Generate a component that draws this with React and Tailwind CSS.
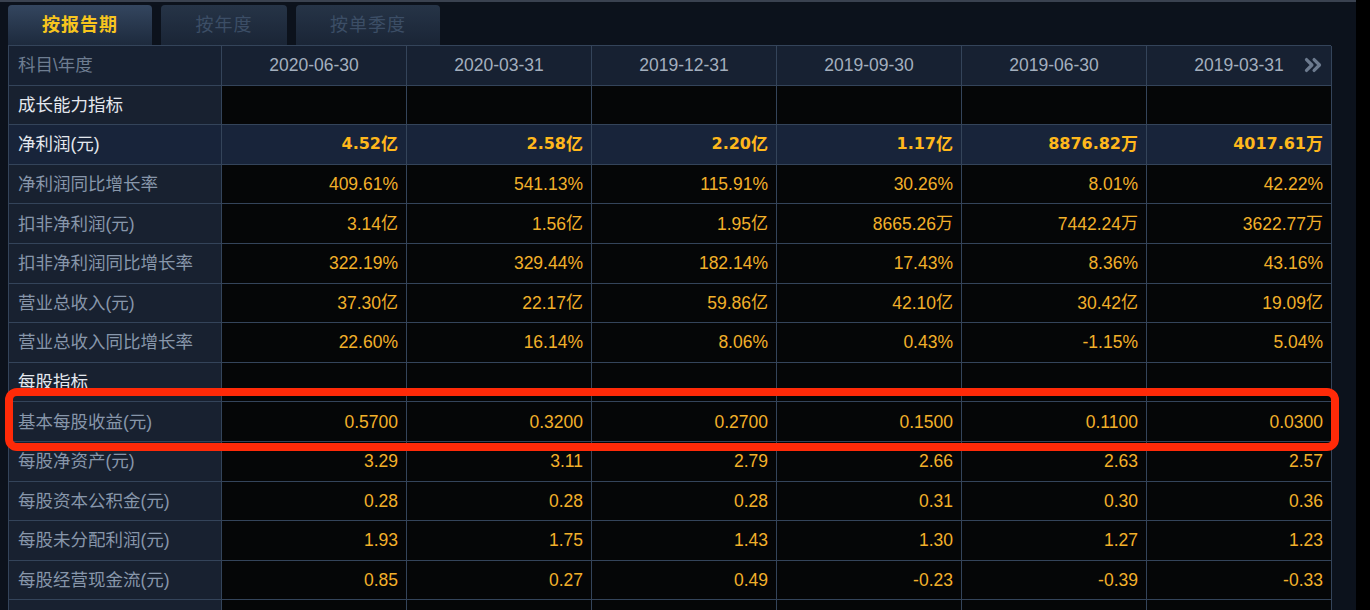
import { ChevronsRight } from "lucide-react";
import { clsx } from "clsx";

const dates = ["2020-06-30", "2020-03-31", "2019-12-31", "2019-09-30", "2019-06-30", "2019-03-31"];

const rows = [
  { label: "成长能力指标", type: "section" },
  { label: "净利润(元)", type: "bold", values: ["4.52亿", "2.58亿", "2.20亿", "1.17亿", "8876.82万", "4017.61万"] },
  { label: "净利润同比增长率", values: ["409.61%", "541.13%", "115.91%", "30.26%", "8.01%", "42.22%"] },
  { label: "扣非净利润(元)", values: ["3.14亿", "1.56亿", "1.95亿", "8665.26万", "7442.24万", "3622.77万"] },
  { label: "扣非净利润同比增长率", values: ["322.19%", "329.44%", "182.14%", "17.43%", "8.36%", "43.16%"] },
  { label: "营业总收入(元)", values: ["37.30亿", "22.17亿", "59.86亿", "42.10亿", "30.42亿", "19.09亿"] },
  { label: "营业总收入同比增长率", values: ["22.60%", "16.14%", "8.06%", "0.43%", "-1.15%", "5.04%"] },
  { label: "每股指标", type: "section" },
  { label: "基本每股收益(元)", values: ["0.5700", "0.3200", "0.2700", "0.1500", "0.1100", "0.0300"] },
  { label: "每股净资产(元)", values: ["3.29", "3.11", "2.79", "2.66", "2.63", "2.57"] },
  { label: "每股资本公积金(元)", values: ["0.28", "0.28", "0.28", "0.31", "0.30", "0.36"] },
  { label: "每股未分配利润(元)", values: ["1.93", "1.75", "1.43", "1.30", "1.27", "1.23"] },
  { label: "每股经营现金流(元)", values: ["0.85", "0.27", "0.49", "-0.23", "-0.39", "-0.33"] },
  { label: "", type: "section" },
];

const font = { fontFamily: '"Liberation Sans", "Noto Sans CJK SC", sans-serif' };

const splitValue = (v) => {
  const m = v.match(/^(.*?)(亿|万)$/);
  return m ? [m[1], m[2]] : [v, ""];
};

const Tab = ({ label, active, width }) => (
  <div
    className={clsx(
      "h-[40px] flex items-center justify-center rounded-t-[4px] text-[18px] tracking-[1px]",
      width,
      active
        ? "bg-gradient-to-b from-[#34465f] to-[#1d2a3d] text-[#f7c51e] font-bold"
        : "bg-gradient-to-b from-[#263447] to-[#1a2536] text-[#3c4e66]"
    )}
  >
    {label}
  </div>
);

export default function App() {
  return (
    <div className="w-[1370px] h-[610px] bg-black overflow-hidden flex" style={font}>
      <div className="relative w-[1356px] h-full bg-[#0c121c] border-t-2 border-[#3a4250] pl-2">
        <div className="flex items-end gap-[9px] h-[43px]">
          <Tab label="按报告期" active width="w-[144px]" />
          <Tab label="按年度" width="w-[126px]" />
          <Tab label="按单季度" width="w-[144px]" />
        </div>

        <div className="w-[1323px] border-t border-l border-[#34445a]">
          <div className="flex h-[39.6px] bg-[#172132]">
            <div className="w-[213px] shrink-0 flex items-center pl-[9px] text-[17.5px] text-[#6e7d91] border-r border-b border-[#34445a]">
              科目\年度
            </div>
            {dates.map((d, i) => (
              <div
                key={d}
                className="relative w-[185px] shrink-0 flex items-center justify-center text-[17.5px] text-[#a3afbe] border-r border-b border-[#34445a]"
              >
                {d}
                {i === dates.length - 1 && (
                  <ChevronsRight className="absolute right-[5px] w-[26px] h-[26px] text-[#6c7a8e]" strokeWidth={3} />
                )}
              </div>
            ))}
          </div>

          {rows.map((row, idx) => {
            const isSection = row.type === "section";
            const isBold = row.type === "bold";
            return (
              <div key={idx} className={clsx("flex h-[39.6px]", isBold ? "bg-[#18243a]" : "bg-[#050607]")}>
                <div
                  className={clsx(
                    "w-[213px] shrink-0 flex items-center pl-[9px] text-[17.5px] border-r border-b border-[#34445a]",
                    isBold ? "bg-[#18243a]" : "bg-[#182130]",
                    isSection || isBold ? "text-[#e4e8ee]" : "text-[#8796aa]"
                  )}
                >
                  {row.label}
                </div>
                {dates.map((d, i) => {
                  const v = row.values ? splitValue(row.values[i]) : null;
                  return (
                    <div
                      key={d}
                      className={clsx(
                        "w-[185px] shrink-0 flex items-center justify-end pr-[8px] border-r border-b border-[#34445a]",
                        isBold ? "text-[#ffb81c] font-bold text-[16px]" : "text-[#f2b02a] text-[17.5px]"
                      )}
                      style={isBold ? { fontFamily: '"DejaVu Sans", "Noto Sans CJK SC", sans-serif' } : undefined}
                    >
                      {v && (
                        <>
                          <span>{v[0]}</span>
                          {v[1] && (
                            <span className="text-[17px]" style={font}>
                              {v[1]}
                            </span>
                          )}
                        </>
                      )}
                    </div>
                  );
                })}
              </div>
            );
          })}
        </div>

        <div className="absolute left-[5px] top-[386px] w-[1334px] h-[63px] border-[8px] border-[#ff2a08] rounded-[12px]" />
      </div>
    </div>
  );
}
